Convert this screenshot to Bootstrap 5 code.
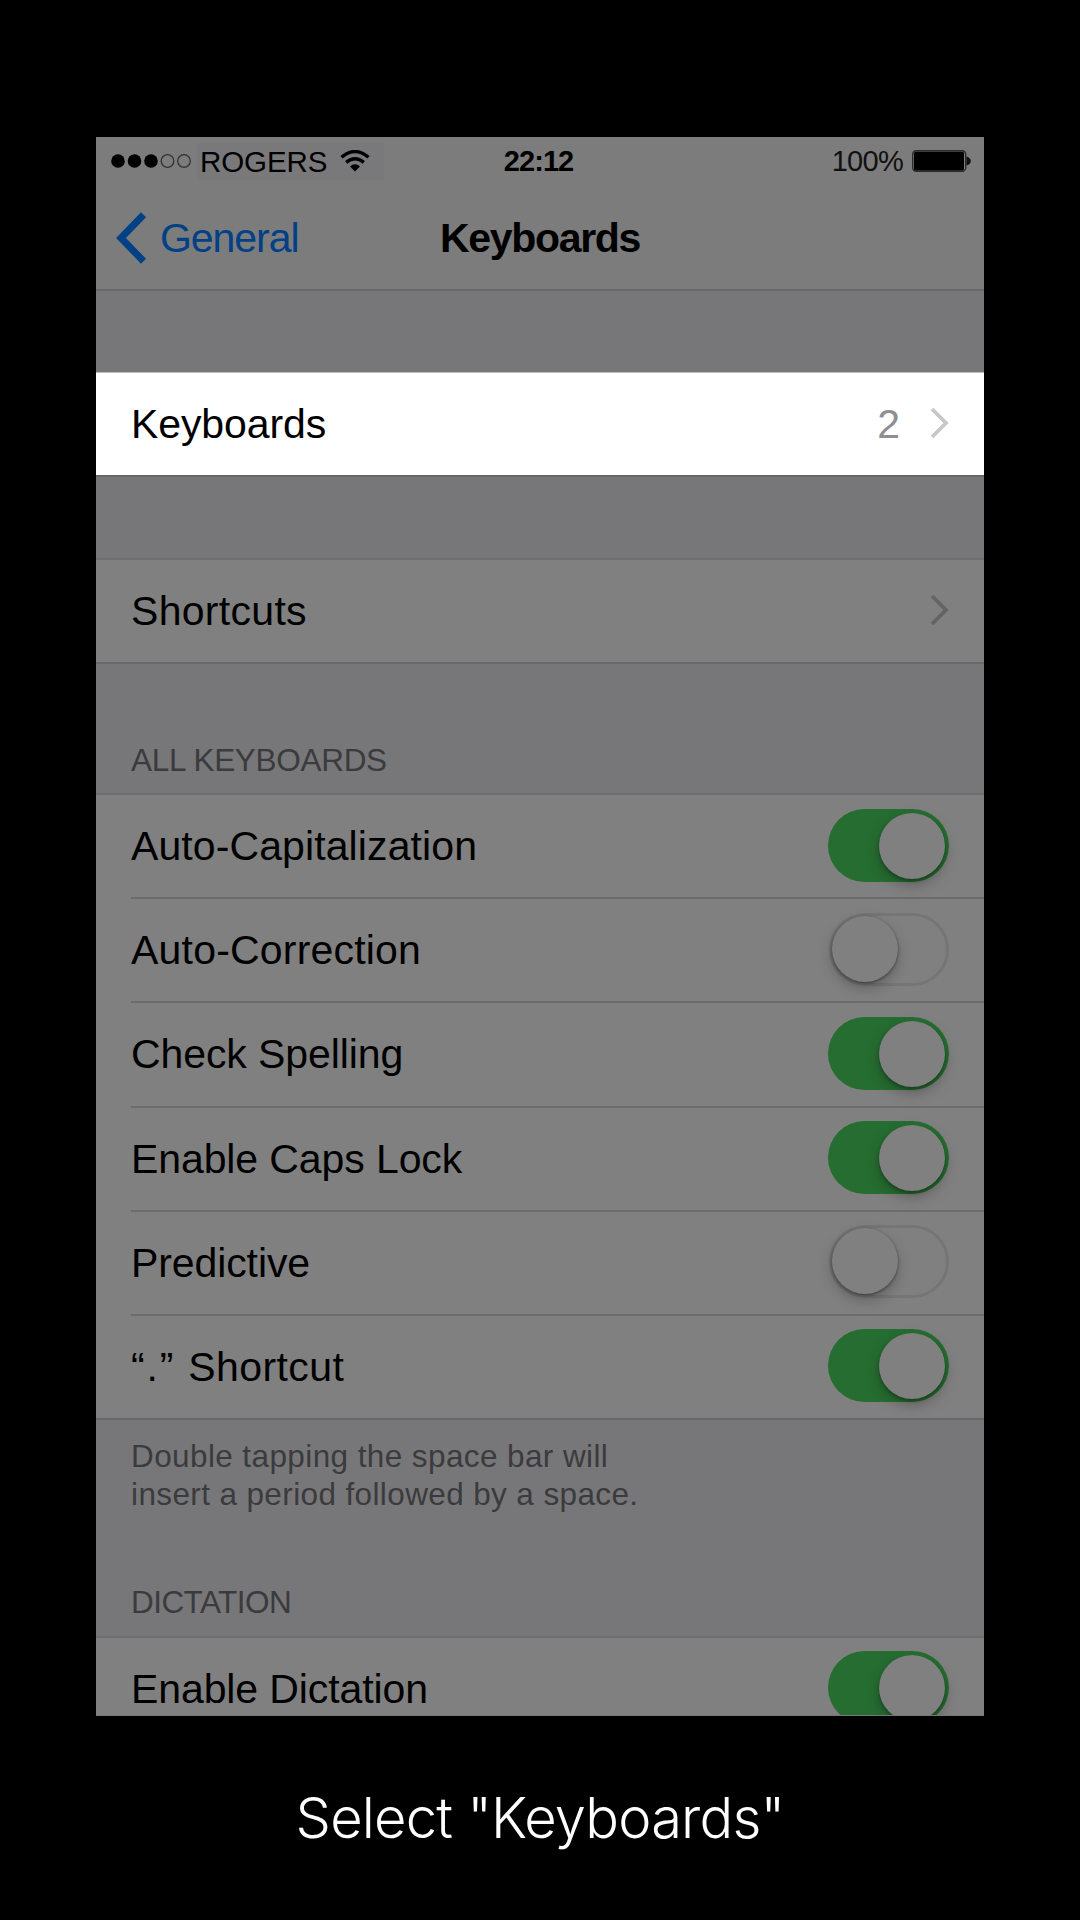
<!DOCTYPE html>
<html lang="en">
<head>
<meta charset="utf-8">
<meta name="viewport" content="width=device-width, initial-scale=1">
<title>Select "Keyboards"</title>
<link href="https://cdn.jsdelivr.net/npm/bootstrap@5.3.0/dist/css/bootstrap.min.css" rel="stylesheet">
<style>
  body { background: #000; font-family: "Liberation Sans", Arial, sans-serif; color: #000; }
  .stage { width: 1080px; height: 1920px; padding-top: 137px; }
  .phone { width: 888px; height: 1579px; background: #777779; }
  .topbar { height: 154px; background: #7c7c7c; border-bottom: 2px solid #68686a; }
  .status { height: 48px; padding: 0 13px 0 15px; font-size: 29.5px; line-height: 48px; }
  .status > div, .navline > div { flex: 1 1 0; }
  .carrier { height: 37px; line-height: 33px; background: #79797b; margin-left: 6px; padding: 0 14px 0 3px; letter-spacing: -.1px; }
  .carrier svg { margin-left: 13px; }
  .clock { font-weight: 700; font-size: 29px; letter-spacing: -.9px; margin-right: 5px; }
  .percent { font-size: 29px; letter-spacing: -.7px; color: #111; margin-right: 9px; }
  .navline { height: 104px; padding: 2px 20px 0; font-size: 41px; line-height: 100px; }
  .back { color: #004085; letter-spacing: -1.05px; margin-left: 13px; }
  .nav-heading { font-weight: 700; letter-spacing: -1.3px; font-size: 41px; }
  .cell-group { background: #808080; border-top: 2px solid #6e6e70; border-bottom: 2px solid #68686a; }
  .cell { height: 104.2px; font-size: 41px; line-height: 102px; margin-left: 35px; padding-right: 35px; border-bottom: 2px solid #6c6c6d; letter-spacing: -.1px; }
  .cell:last-child { border-bottom: 0; height: 102px; }
  .cell-group.lit { background: #fff; margin-top: 81px; border-top: 1px solid #c0c0c0; }
  .gap-after { margin-top: 81px; }
  .amount { color: #8e8e93; margin-right: 30px; }
  .chev { color: #646467; margin-top: -3px; }
  .lit .chev { color: #c7c7cb; }
  .section-label { font-size: 31.5px; line-height: 40px; padding-left: 35px; color: #3b3b3d; }
  .toggle { width: 121px; height: 73px; border-radius: 37px; background: #266d31; padding: 4px; margin-bottom: 2px; }
  .toggle i { display: block; width: 66px; height: 66px; border-radius: 50%; background: #808080; margin-left: auto; box-shadow: 0 6px 14px rgba(0,0,0,.26), 0 2px 3px rgba(0,0,0,.25); }
  .toggle.off { background: #808080; width: 120px; height: 73px; border: 3px solid #757576; padding: 0; margin-right: 0; }
  .toggle.off i { margin-left: 0; box-shadow: 0 6px 14px rgba(0,0,0,.24), 0 1px 3px rgba(0,0,0,.45); }
  .quoted { letter-spacing: 1.8px; }
  .cut { height: 79px; overflow: hidden; border-bottom: 0; }
  .caption-text { font-family: Inter, "Liberation Sans", sans-serif; font-weight: 300; font-size: 56px; line-height: 68px; letter-spacing: -.8px; color: #fff; margin-top: 68px; }
</style>
</head>
<body>
<main class="stage d-flex flex-column align-items-center">
  <section class="phone overflow-hidden">
    <header class="topbar">
      <div class="status d-flex align-items-center">
        <div class="d-flex align-items-center">
          <svg width="80" height="16" viewBox="0 0 80 16">
            <g><circle cx="7" cy="8" r="6.8"/><circle cx="23.5" cy="8" r="6.8"/><circle cx="40" cy="8" r="6.8"/></g>
            <g fill="none" stroke="#333" stroke-width="1.3"><circle cx="56.5" cy="8" r="6.3"/><circle cx="73" cy="8" r="6.3"/></g>
          </svg>
          <span class="carrier d-flex align-items-center">ROGERS
            <svg width="30" height="22" viewBox="0 0 30 22" fill="none" stroke="#000" stroke-width="3.4">
              <path d="M1.5 7.3Q15-4.2 28.5 7.3"/><path d="M6.2 12.4Q15 5.1 23.8 12.4"/><path d="M15 21.5L10 16.4Q15 12 20 16.4Z" fill="#000" stroke="none"/>
            </svg>
          </span>
        </div>
        <span class="clock">22:12</span>
        <div class="d-flex align-items-center justify-content-end">
          <span class="percent">100%</span>
          <svg width="59" height="22" viewBox="0 0 59 22">
            <rect x=".7" y=".7" width="53" height="20.6" rx="3.5" fill="none" stroke="#2b2b2b" stroke-width="1.4"/>
            <rect x="2" y="1.8" width="50" height="18.6" rx="1.5"/>
            <path d="M54.5 6.5Q58.8 8 58.8 11T54.5 15.5Z" fill="#111"/>
          </svg>
        </div>
      </div>
      <div class="navline d-flex align-items-center">
        <div class="d-flex align-items-center">
          <svg width="31" height="52" viewBox="0 0 31 52" fill="none" stroke="#004085" stroke-width="7"><path d="M27.5 2.8L5 26L27.5 49.2"/></svg>
          <span class="back">General</span>
        </div>
        <span class="nav-heading">Keyboards</span>
        <div></div>
      </div>
    </header>

    <div class="cell-group lit">
      <div class="cell d-flex align-items-center">
        <span class="me-auto">Keyboards</span><span class="amount">2</span>
        <svg class="chev" width="19" height="32" viewBox="0 0 19 32" fill="none" stroke="currentColor" stroke-width="3.8"><path d="M2 2L16 16L2 30"/></svg>
      </div>
    </div>

    <div class="cell-group gap-after">
      <div class="cell d-flex align-items-center">
        <span class="me-auto" style="letter-spacing:.3px">Shortcuts</span>
        <svg class="chev" width="19" height="32" viewBox="0 0 19 32" fill="none" stroke="currentColor" stroke-width="3.8"><path d="M2 2L16 16L2 30"/></svg>
      </div>
    </div>

    <div class="section-label" style="padding-top:76px;height:129px;letter-spacing:-.3px">ALL KEYBOARDS</div>
    <div class="cell-group">
      <div class="cell d-flex align-items-center justify-content-between"><span style="letter-spacing:.1px">Auto-Capitalization</span><span class="toggle"><i></i></span></div>
      <div class="cell d-flex align-items-center justify-content-between"><span style="letter-spacing:.2px">Auto-Correction</span><span class="toggle off"><i></i></span></div>
      <div class="cell d-flex align-items-center justify-content-between"><span>Check Spelling</span><span class="toggle"><i></i></span></div>
      <div class="cell d-flex align-items-center justify-content-between"><span>Enable Caps Lock</span><span class="toggle"><i></i></span></div>
      <div class="cell d-flex align-items-center justify-content-between"><span>Predictive</span><span class="toggle off"><i></i></span></div>
      <div class="cell d-flex align-items-center justify-content-between"><span style="letter-spacing:.4px"><span class="quoted">“.” </span>Shortcut</span><span class="toggle"><i></i></span></div>
    </div>
    <div class="section-label" style="padding-top:17px;line-height:38px;height:148px"><span style="letter-spacing:.4px">Double tapping the space bar will</span><br><span style="letter-spacing:.38px">insert a period followed by a space.</span></div>
    <div class="section-label" style="padding-top:14px;height:68px;letter-spacing:-.55px">DICTATION</div>
    <div class="cell-group cut">
      <div class="cell d-flex align-items-center justify-content-between"><span>Enable Dictation</span><span class="toggle"><i></i></span></div>
    </div>
  </section>
  <p class="caption-text mb-0">Select "Keyboards"</p>
</main>
<script src="https://cdn.jsdelivr.net/npm/bootstrap@5.3.0/dist/js/bootstrap.bundle.min.js"></script>
</body>
</html>
